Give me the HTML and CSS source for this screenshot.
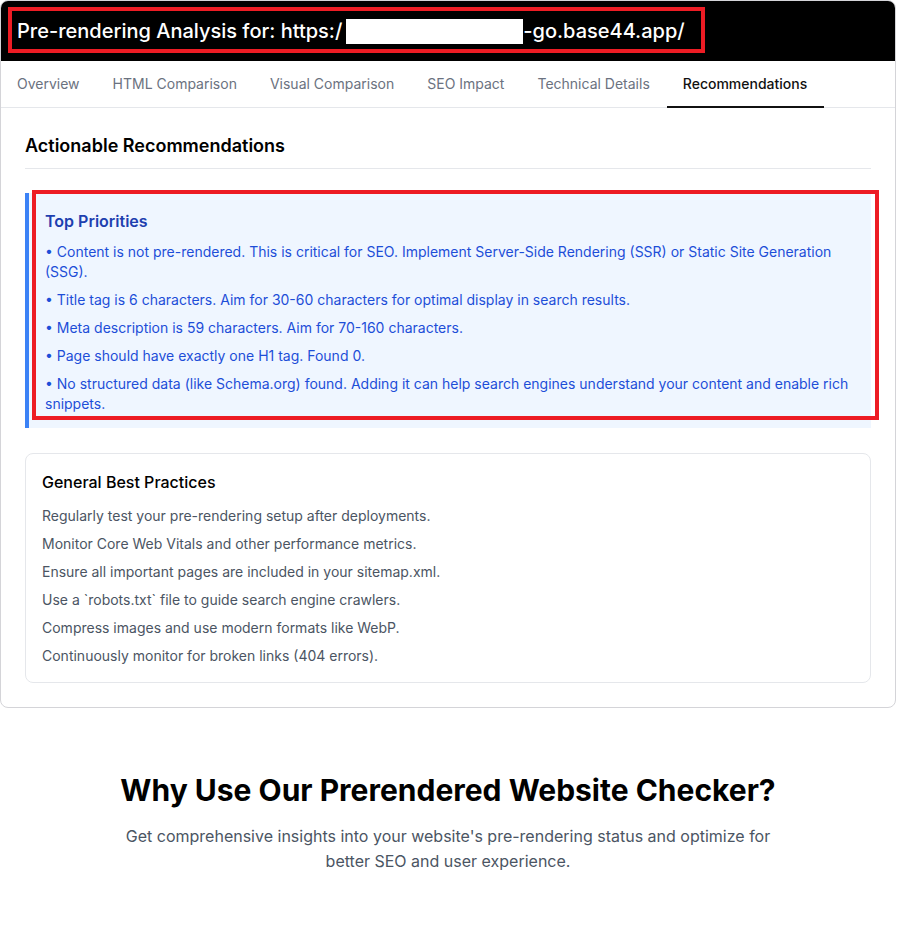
FILE: index.html
```html
<!DOCTYPE html>
<html lang="en">
  <head>
    <meta charset="UTF-8" />
    <meta name="viewport" content="width=device-width, initial-scale=1.0" />
    <title>Prerendered Website Checker</title>
    <link rel="stylesheet" href="styles.css">
  </head>
  <body>
    <!-- Analysis result card -->
    <div class="result-card">
      <div class="result-header">
        <h2 class="result-title">Pre-rendering Analysis for: https:/<span class="redacted"></span>-go.base44.app/</h2>
        <div class="mark mark-title"></div>
      </div>

      <nav class="tabs">
        <a href="#" class="tab">Overview</a>
        <a href="#" class="tab">HTML Comparison</a>
        <a href="#" class="tab">Visual Comparison</a>
        <a href="#" class="tab">SEO Impact</a>
        <a href="#" class="tab">Technical Details</a>
        <a href="#" class="tab active">Recommendations</a>
      </nav>

      <div class="tab-body">
        <h3 class="section-title">Actionable Recommendations</h3>

        <div class="priorities">
          <h4>Top Priorities</h4>
          <ul>
            <li>• Content is not pre-rendered. This is critical for SEO. Implement Server-Side Rendering (SSR) or Static Site Generation (SSG).</li>
            <li>• Title tag is 6 characters. Aim for 30-60 characters for optimal display in search results.</li>
            <li>• Meta description is 59 characters. Aim for 70-160 characters.</li>
            <li>• Page should have exactly one H1 tag. Found 0.</li>
            <li>• No structured data (like Schema.org) found. Adding it can help search engines understand your content and enable rich snippets.</li>
          </ul>
          <div class="mark mark-priorities"></div>
        </div>

        <div class="practices">
          <h4>General Best Practices</h4>
          <ul>
            <li>Regularly test your pre-rendering setup after deployments.</li>
            <li>Monitor Core Web Vitals and other performance metrics.</li>
            <li>Ensure all important pages are included in your sitemap.xml.</li>
            <li>Use a `robots.txt` file to guide search engine crawlers.</li>
            <li>Compress images and use modern formats like WebP.</li>
            <li>Continuously monitor for broken links (404 errors).</li>
          </ul>
        </div>
      </div>
    </div>

    <!-- Features intro -->
    <section class="why">
      <h2>Why Use Our Prerendered Website Checker?</h2>
      <p>Get comprehensive insights into your website's pre-rendering status and optimize for better SEO and user experience.</p>
    </section>
  </body>
</html>
```

FILE: styles.css
```css
body {
  margin: 0;
  font-family: Inter, "Noto Sans", sans-serif;
  background: #fff;
  color: #111827;
}

/* Card */
.result-card {
  width: 896px;
  box-sizing: border-box;
  border: 1px solid #d4d4d8;
  border-radius: 8px;
  overflow: hidden;
  background: #fff;
}

.result-header {
  position: relative;
  background: #000;
  padding: 16px;
}

.result-title {
  margin: 0;
  color: #fff;
  font-size: 20px;
  line-height: 28px;
  font-weight: 500;
}

.redacted {
  display: inline-block;
  width: 177px;
  height: 25px;
  margin-left: 4px;
  background: #fff;
  vertical-align: -6px;
}

/* red annotation outlines */
.mark {
  position: absolute;
  border: 4px solid #ed1c24;
  pointer-events: none;
}

.mark-title {
  left: 7px;
  top: 6px;
  width: 689px;
  height: 38px;
}

/* Tabs */
.tabs {
  display: flex;
  border-bottom: 1px solid #e5e7eb;
}

.tab {
  padding: 13px 17px 12px 16px;
  font-size: 14px;
  line-height: 20px;
  color: #6b7280;
  text-decoration: none;
  border-bottom: 2px solid transparent;
  margin-bottom: -1px;
}

.tab.active {
  color: #111;
  font-weight: 500;
  border-bottom-color: #111;
}

.tab-body {
  padding: 24px;
}

.section-title {
  margin: 0 0 24px;
  padding-bottom: 8px;
  border-bottom: 1px solid #e5e7eb;
  font-size: 18px;
  line-height: 28px;
  font-weight: 600;
  color: #000;
}

/* Top priorities */
.priorities {
  position: relative;
  background: #eff6ff;
  border-left: 4px solid #3b82f6;
  padding: 16px 16px 14px;
  margin-bottom: 25px;
}

.priorities h4 {
  margin: 0 0 9px;
  font-size: 16px;
  line-height: 24px;
  font-weight: 600;
  color: #1e40af;
}

.priorities ul,
.practices ul {
  list-style: none;
  margin: 0;
  padding: 0;
}

.priorities li {
  font-size: 14px;
  line-height: 20px;
  color: #1d4ed8;
  margin-top: 8px;
}

.priorities li:first-child {
  margin-top: 0;
}

.mark-priorities {
  left: 3px;
  top: -3px;
  right: -8px;
  bottom: 8px;
}

/* Best practices */
.practices {
  border: 1px solid #e5e7eb;
  border-radius: 8px;
  padding: 16px;
}

.practices h4 {
  margin: 0 0 12px;
  font-size: 16px;
  line-height: 24px;
  font-weight: 500;
  color: #000;
}

.practices li {
  font-size: 14px;
  line-height: 20px;
  color: #4b5563;
  margin-top: 8px;
}

.practices li:first-child {
  margin-top: 0;
}

/* Why section */
.why {
  width: 896px;
  text-align: center;
  padding-top: 64px;
}

.why h2 {
  margin: 0 0 16px;
  font-size: 30px;
  line-height: 36px;
  font-weight: 700;
  color: #000;
}

.why p {
  margin: 0 auto;
  max-width: 672px;
  font-size: 16px;
  line-height: 25px;
  color: #4b5563;
}
```
